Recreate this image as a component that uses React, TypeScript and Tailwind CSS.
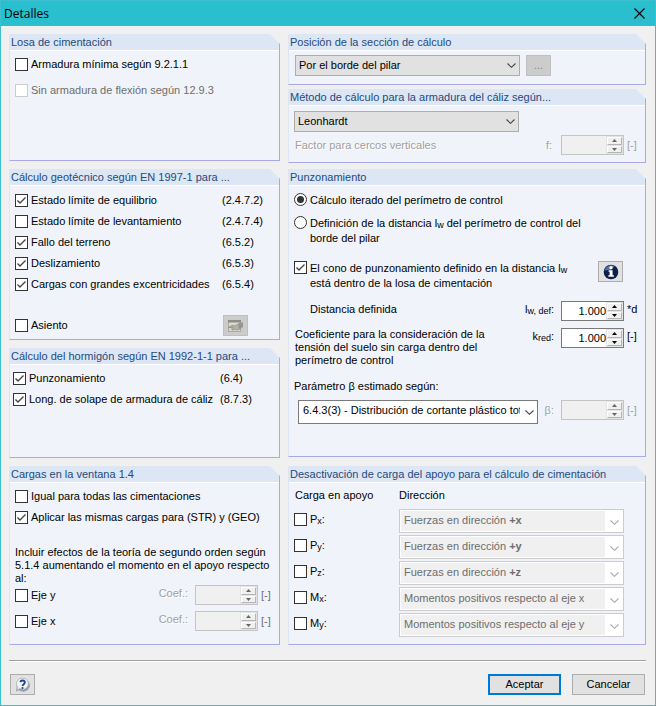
import React, { useState } from 'react';
import clsx from 'clsx';

const Sub = ({ children }: { children: React.ReactNode }) => (
    <sub className="bottom-[-1px] text-[9px] leading-none">{children}</sub>
);

const Panel = ({ title, className, bodyClassName, children }: {
    title: string;
    className?: string;
    bodyClassName?: string;
    children: React.ReactNode;
}) => (
    <section
        className={clsx(
            "flex flex-col bg-[#f0f4fa] border-l border-l-[#dce6f5] border-r border-b border-r-[#a9a9ea] border-b-[#a9a9ea] [clip-path:polygon(0_0,calc(100%-10px)_0,100%_10px,100%_100%,0_100%)]",
            className
        )}
    >
        <h2 className="bg-[#dce6f5] border-b border-white pl-px text-[11px] leading-4 text-[#1f4a7c] whitespace-nowrap">{title}</h2>
        <div className={clsx("flex flex-col", bodyClassName)}>{children}</div>
    </section>
);

const Check = ({ label, checked = false, disabled = false, multiline = false }: {
    label: React.ReactNode;
    checked?: boolean;
    disabled?: boolean;
    multiline?: boolean;
}) => {
    const [on, setOn] = useState(checked);
    return (
        <label className={clsx("flex gap-[3px]", multiline ? "items-start leading-[15px]" : "items-center", disabled && "text-[#6d6d6d]")}>
            <span className="grid shrink-0">
                <input
                    type="checkbox"
                    checked={on}
                    disabled={disabled}
                    onChange={() => setOn(!on)}
                    className="[grid-area:1/1] appearance-none size-[13px] bg-white border border-[#333] disabled:border-[#ccc]"
                />
                {on && (
                    <svg viewBox="0 0 13 13" className="[grid-area:1/1] size-[13px] pointer-events-none" fill="none" stroke="#444" strokeWidth="1.4">
                        <path d="M2.5 6.5 L5 9 L10.5 3.5" />
                    </svg>
                )}
            </span>
            <span>{label}</span>
        </label>
    );
};

const Radio = ({ label, checked, onSelect }: {
    label: React.ReactNode;
    checked: boolean;
    onSelect: () => void;
}) => (
    <label className="flex items-start gap-[3px] leading-[15px]">
        <span className="grid shrink-0 place-items-center">
            <input
                type="radio"
                name="perimetro"
                checked={checked}
                onChange={onSelect}
                className="[grid-area:1/1] appearance-none size-[13px] rounded-full bg-white border border-[#333]"
            />
            {checked && <span className="[grid-area:1/1] size-[7px] rounded-full bg-[#333] pointer-events-none" />}
        </span>
        <span>{label}</span>
    </label>
);

const Stepper = ({ label, name, value = "", unit, disabled = false, darkUnit = false }: {
    label: React.ReactNode;
    name: string;
    value?: string;
    unit: string;
    disabled?: boolean;
    darkUnit?: boolean;
}) => {
    const [text, setText] = useState(value);
    const step = (d: number) => setText(((parseFloat(text) || 0) + d).toFixed(3));
    return (
        <div className={clsx("flex shrink-0 items-start", disabled && "text-[#a0a0a0]")}>
            <label
                htmlFor={name}
                className={clsx("pr-[7px] whitespace-nowrap", disabled && !darkUnit ? "leading-5" : "leading-4", disabled && "[text-shadow:1px_1px_#fff]")}
            >
                {label}
            </label>
            <span className={clsx("flex h-5 w-[63px] border", disabled ? "border-[#c4c4c4] bg-[#f0f0f0]" : "border-[#7a7a7a] bg-white")}>
                <input
                    id={name}
                    type="text"
                    value={text}
                    disabled={disabled}
                    onChange={(e) => setText(e.target.value)}
                    className="min-w-0 flex-1 text-right outline-none"
                />
                <span className="flex w-[17px] flex-col gap-px bg-[#e3e3e3] p-px">
                    <button type="button" disabled={disabled} onClick={() => step(0.1)} aria-label="Aumentar" className="flex flex-1 items-center justify-center border border-t-white border-l-white border-r-[#b5b5b5] border-b-[#b5b5b5] bg-[#f0f0f0]">
                        <svg viewBox="0 0 5 3" className="h-[3px] w-[5px]" fill={disabled ? "#666" : "#000"}><path d="M0 3 L2.5 0 L5 3Z" /></svg>
                    </button>
                    <button type="button" disabled={disabled} onClick={() => step(-0.1)} aria-label="Disminuir" className="flex flex-1 items-center justify-center border border-t-white border-l-white border-r-[#b5b5b5] border-b-[#b5b5b5] bg-[#f0f0f0]">
                        <svg viewBox="0 0 5 3" className="h-[3px] w-[5px]" fill={disabled ? "#666" : "#000"}><path d="M0 0 L2.5 3 L5 0Z" /></svg>
                    </button>
                </span>
            </span>
            <span className={clsx("w-[21px] pl-[3px]", disabled ? "leading-5" : "leading-4", darkUnit && "text-[#6d6d6d]")}>{unit}</span>
        </div>
    );
};

const Chevron = ({ className }: { className: string }) => (
    <svg viewBox="0 0 9 5" className={clsx("absolute h-[5px] w-[9px] pointer-events-none", className)} fill="none" strokeWidth="1.1">
        <path d="M0.5 0.5 L4.5 4.3 L8.5 0.5" />
    </svg>
);

const GreySelect = ({ label, value }: { label: string; value: string }) => (
    <div className="relative w-[225px]">
        <select aria-label={label} className="block h-[21px] w-full appearance-none border border-[#adadad] bg-[#e1e1e1] pl-[3px] pr-5">
            <option>{value}</option>
        </select>
        <Chevron className="top-2 right-1 stroke-[#444]" />
    </div>
);

const loads = [
    { axis: "P", sub: "x", text: "Fuerzas en dirección", sign: "+x" },
    { axis: "P", sub: "y", text: "Fuerzas en dirección", sign: "+y" },
    { axis: "P", sub: "z", text: "Fuerzas en dirección", sign: "+z" },
    { axis: "M", sub: "x", text: "Momentos positivos respecto al eje x", sign: "" },
    { axis: "M", sub: "y", text: "Momentos positivos respecto al eje y", sign: "" },
];

const geoChecks = [
    { label: "Estado límite de equilibrio", code: "(2.4.7.2)", on: true },
    { label: "Estado límite de levantamiento", code: "(2.4.7.4)", on: false },
    { label: "Fallo del terreno", code: "(6.5.2)", on: true },
    { label: "Deslizamiento", code: "(6.5.3)", on: true },
    { label: "Cargas con grandes excentricidades", code: "(6.5.4)", on: true },
];

const concreteChecks = [
    { label: "Punzonamiento", code: "(6.4)" },
    { label: "Long. de solape de armadura de cáliz", code: "(8.7.3)" },
];

export default function App() {
    const [mode, setMode] = useState("iterado");

    return (
        <div className="flex min-h-screen flex-col border border-[#3cc0cf] bg-[#f0f0f0] font-['Liberation_Sans',Arial,sans-serif] text-[11px] leading-[13px] text-black">
            <header className="flex h-[25px] items-center justify-between bg-[#2abfcf] pl-[3px] pr-[10px]">
                <h1 className="font-['Open_Sans','Noto_Sans',sans-serif] text-xs">Detalles</h1>
                <button type="button" aria-label="Cerrar">
                    <svg viewBox="0 0 11 11" className="size-[11px]" stroke="#000" strokeWidth="1.1"><path d="M0.5 0.5 L10.5 10.5 M10.5 0.5 L0.5 10.5" /></svg>
                </button>
            </header>

            <main className="grid grid-cols-[271fr_358fr] gap-2 pt-2 pr-[9px] pl-2">
                <div className="flex min-w-0 flex-col gap-2">
                    <Panel title="Losa de cimentación" bodyClassName="gap-[13px] pt-[7px] pb-[63px] pl-[5px]">
                        <Check label="Armadura mínima según 9.2.1.1" />
                        <Check label="Sin armadura de flexión según 12.9.3" disabled />
                    </Panel>

                    <Panel title="Cálculo geotécnico según EN 1997-1 para ..." bodyClassName="pt-1 pb-[3px] pl-[5px]">
                        {geoChecks.map((c) => (
                            <div key={c.label} className="flex h-[21px] items-center justify-between">
                                <Check label={c.label} checked={c.on} />
                                <span className="w-[57px]">{c.code}</span>
                            </div>
                        ))}
                        <div className="mt-5 flex items-center justify-between">
                            <Check label="Asiento" />
                            <span className="flex w-[56px]">
                                <button type="button" disabled aria-label="Editar asiento" className="flex h-[21px] w-[25px] items-center justify-center border border-[#bfbfbf] bg-[#ccc]">
                                    <svg viewBox="0 0 17 14" className="h-[14px] w-[17px]">
                                        <rect x="1.5" y="1.5" width="12" height="11" fill="#d9d9d2" stroke="#aaaaa1" />
                                        <path d="M1 1h13v2.5H1z" fill="#8e8e86" />
                                        <path d="M1.5 8.5l3.5-2 3 .5 3-2 2 .5V10l-3 1-2-1-2 1.2-1.5-1 1.5-1.6z" fill="#b4b4aa" stroke="#85857c" strokeWidth="0.7" />
                                        <path d="M12 3.5h4V8l-3 2-2-2z" fill="#96968e" />
                                    </svg>
                                </button>
                            </span>
                        </div>
                    </Panel>

                    <Panel title="Cálculo del hormigón según EN 1992-1-1 para ..." bodyClassName="pt-[3px] pb-[47px] pl-[3px] pr-0.5">
                        {concreteChecks.map((c) => (
                            <div key={c.label} className="flex h-[21px] items-center justify-between">
                                <Check label={c.label} checked />
                                <span className="w-[57px]">{c.code}</span>
                            </div>
                        ))}
                    </Panel>

                    <Panel title="Cargas en la ventana 1.4" className="flex-1" bodyClassName="pt-[7px] pb-3 pl-[5px]">
                        <Check label="Igual para todas las cimentaciones" />
                        <div className="mt-2 mb-[22px]">
                            <Check label="Aplicar las mismas cargas para (STR) y (GEO)" checked />
                        </div>
                        <p>Incluir efectos de la teoría de segundo orden según 5.1.4 aumentando el momento en el apoyo respecto al:</p>
                        <div className="flex flex-col gap-1.5">
                            {["y", "x"].map((axis) => (
                                <div key={axis} className="flex items-center justify-between">
                                    <Check label={`Eje ${axis}`} />
                                    <Stepper name={`coef-${axis}`} label="Coef.:" unit="[-]" disabled darkUnit />
                                </div>
                            ))}
                        </div>
                    </Panel>
                </div>

                <div className="flex min-w-0 flex-col">
                    <Panel title="Posición de la sección de cálculo" bodyClassName="pt-1 pb-2 pl-1.5">
                        <div className="flex gap-1.5">
                            <GreySelect label="Posición de la sección de cálculo" value="Por el borde del pilar" />
                            <button type="button" disabled className="h-[21px] w-[25px] border border-[#bfbfbf] bg-[#ccc] text-[#838383]">...</button>
                        </div>
                    </Panel>

                    <Panel title="Método de cálculo para la armadura del cáliz según..." className="mt-1" bodyClassName="gap-[3px] pt-[5px] pb-[7px] pl-[5px]">
                        <GreySelect label="Método de cálculo" value="Leonhardt" />
                        <div className="flex items-center justify-between pl-px text-[#a0a0a0]">
                            <span className="leading-5 [text-shadow:1px_1px_#fff]">Factor para cercos verticales</span>
                            <Stepper name="factor" label={<span className="pr-0.5">f:</span>} unit="[-]" disabled />
                        </div>
                    </Panel>

                    <Panel title="Punzonamiento" className="mt-1.5" bodyClassName="pt-[7px] pb-8 pl-[5px]">
                        <Radio label="Cálculo iterado del perímetro de control" checked={mode === "iterado"} onSelect={() => setMode("iterado")} />
                        <div className="mt-2 mb-[15px] pr-14">
                            <Radio
                                label={<>Definición de la distancia l<Sub>w</Sub> del perímetro de control del borde del pilar</>}
                                checked={mode === "distancia"}
                                onSelect={() => setMode("distancia")}
                            />
                        </div>
                        <div className="flex items-start justify-between pr-[22px]">
                            <div className="w-[284px]">
                                <Check
                                    checked
                                    multiline
                                    label={<>El cono de punzonamiento definido en la distancia l<Sub>w</Sub> está dentro de la losa de cimentación</>}
                                />
                            </div>
                            <button type="button" aria-label="Información" className="flex h-[21px] w-[25px] items-center justify-center border border-[#adadad] bg-[#e1e1e1]">
                                <svg viewBox="0 0 16 16" className="size-4">
                                    <circle cx="8" cy="8" r="7.3" fill="#0e1f4d" />
                                    <path d="M1.5 6.5a6.8 6.8 0 0 1 10-4.2c-2 3-6 4-10 4.2z" fill="#5570a8" />
                                    <circle cx="8" cy="3.8" r="1.7" fill="#fff" />
                                    <path d="M5.6 6.3h4v4.9h1.3v1.6H5.4v-1.6h1.2V7.8h-1z" fill="#fff" />
                                </svg>
                            </button>
                        </div>

                        <div className="mt-2.5 flex justify-between pl-4">
                            <span className="leading-4">Distancia definida</span>
                            <Stepper name="lwdef" label={<>l<Sub>w, def</Sub>:</>} value="1.000" unit="*d" />
                        </div>
                        <div className="mt-[7px] flex items-start justify-between pl-px">
                            <p className="w-[190px]">Coeficiente para la consideración de la tensión del suelo sin carga dentro del perímetro de control</p>
                            <Stepper name="kred" label={<>k<Sub>red</Sub>:</>} value="1.000" unit="[-]" />
                        </div>

                        <label htmlFor="beta-metodo" className="mt-[13px]">Parámetro β estimado según:</label>
                        <div className="mt-[7px] flex items-start justify-between pl-1">
                            <div className="relative w-60">
                                <select id="beta-metodo" className="block h-6 w-full appearance-none border border-[#7a7a7a] bg-white pr-[17px] pb-1 pl-1">
                                    <option>6.4.3(3) - Distribución de cortante plástico total</option>
                                </select>
                                <Chevron className="top-2.5 right-1 stroke-[#444]" />
                            </div>
                            <Stepper name="beta" label="β:" unit="[-]" disabled />
                        </div>
                    </Panel>

                    <Panel title="Desactivación de carga del apoyo para el cálculo de cimentación" className="mt-[9px] flex-1" bodyClassName="pt-1.5 pb-[7px] pl-[5px] pr-[21px]">
                        <div className="mb-[7px] flex pl-px">
                            <span className="w-[104px]">Carga en apoyo</span>
                            <span>Dirección</span>
                        </div>
                        <div className="flex flex-col gap-0.5">
                            {loads.map((l) => (
                                <div key={l.axis + l.sub} className="flex items-start">
                                    <div className="w-[105px] pt-1">
                                        <Check label={<>{l.axis}<Sub>{l.sub}</Sub>:</>} />
                                    </div>
                                    <div className="relative h-6 min-w-0 flex-1 border border-[#ccc] bg-white p-px text-[#6d6d6d]">
                                        <select
                                            disabled
                                            aria-label={`Dirección ${l.axis}${l.sub}`}
                                            className={clsx("block h-5 w-[calc(100%-17px)] appearance-none bg-[#f0f0f0] pb-0.5 pl-[3px] opacity-100", l.sign && "text-transparent")}
                                        >
                                            <option>{l.text} {l.sign}</option>
                                        </select>
                                        {l.sign && (
                                            <span aria-hidden="true" className="pointer-events-none absolute top-px left-1 leading-[18px]">
                                                {l.text} <b>{l.sign}</b>
                                            </span>
                                        )}
                                        <Chevron className="top-2.5 right-1 stroke-[#aaa]" />
                                    </div>
                                </div>
                            ))}
                        </div>
                    </Panel>
                </div>
            </main>

            <footer className="mr-[9px] ml-2 mt-[15px] flex items-center justify-between border-t border-[#a0a0a0] pt-[13px] pr-px pb-2.5 pl-px shadow-[inset_0_1px_0_#fff]">
                <button type="button" aria-label="Ayuda" className="flex h-[21px] w-[25px] items-center justify-center border border-[#adadad] bg-[#e1e1e1]">
                    <svg viewBox="0 0 16 16" className="size-4">
                        <path d="M4 13.2A6.6 6.2 0 1 0 1.8 10L1 14.5z" fill="#9a9ea6" />
                        <path d="M7.6 1.2a5.8 5.6 0 1 1-3 10.4L1.8 13.6l.8-3.4A5.8 5.6 0 0 1 7.6 1.2z" fill="#f3f5f9" stroke="#a4a8b0" strokeWidth="0.7" />
                        <path d="M5.4 5.2C5.6 3 10 2.9 9.8 5.5 9.7 7.2 7.6 7.2 7.6 9" fill="none" stroke="#24408e" strokeWidth="1.9" />
                        <circle cx="7.5" cy="11" r="1.1" fill="#24408e" />
                    </svg>
                </button>
                <div className="flex gap-[11px]">
                    <button type="button" className="h-[21px] w-[73px] border-2 border-[#0078d7] bg-[#e1e1e1]">Aceptar</button>
                    <button type="button" className="h-[21px] w-[73px] border border-[#adadad] bg-[#e1e1e1]">Cancelar</button>
                </div>
            </footer>
        </div>
    );
}
